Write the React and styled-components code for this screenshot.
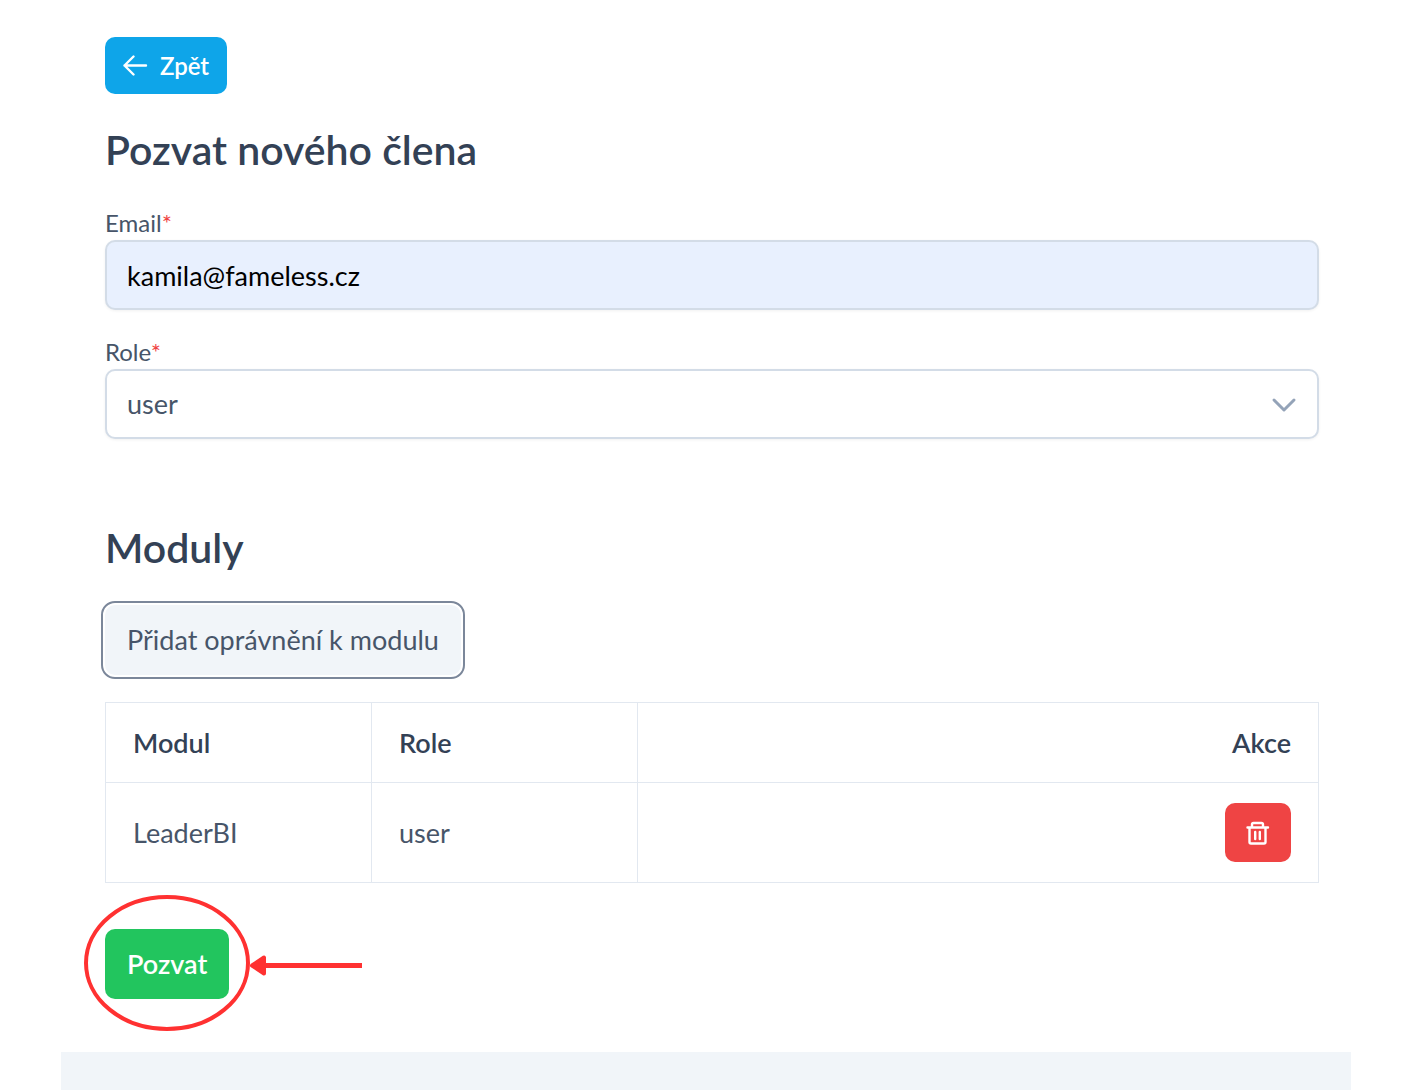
import React, { useState } from "react";
import styled, { createGlobalStyle } from "styled-components";

const App = () => {
  const [email, setEmail] = useState("kamila@fameless.cz");
  const [role, setRole] = useState("user");
  const [modules, setModules] = useState([{ name: "LeaderBI", role: "user" }]);

  const addModule = () => {
    setModules([...modules, { name: "LeaderBI", role: "user" }]);
  };

  const removeModule = (index) => {
    setModules(modules.filter((_, i) => i !== index));
  };

  return (
    <Page>
      <GlobalStyle />
      <Card onSubmit={(e) => e.preventDefault()}>
        <BackButton type="button">
          <svg width="25" height="24" viewBox="0 0 25 24" aria-hidden="true">
            <path
              d="M10.500 2.500 1.500 11.500l9 9M1.500 11.500h21.500"
              fill="none"
              stroke="currentColor"
              strokeWidth="2.400"
              strokeLinecap="round"
              strokeLinejoin="round"
            />
          </svg>
          Zpět
        </BackButton>

        <Title>Pozvat nového člena</Title>

        <Field>
          <Label htmlFor="email">
            Email<Required>*</Required>
          </Label>
          <Input
            id="email"
            type="email"
            value={email}
            onChange={(e) => setEmail(e.target.value)}
          />
        </Field>

        <Field>
          <Label htmlFor="role">
            Role<Required>*</Required>
          </Label>
          <SelectWrapper>
            <Select
              id="role"
              value={role}
              onChange={(e) => setRole(e.target.value)}
            >
              <option value="user">user</option>
              <option value="admin">admin</option>
            </Select>
            <Chevron viewBox="0 0 26 16" aria-hidden="true">
              <path
                d="M3 3l10 10L23 3"
                fill="none"
                stroke="currentColor"
                strokeWidth="3"
                strokeLinecap="round"
                strokeLinejoin="round"
              />
            </Chevron>
          </SelectWrapper>
        </Field>

        <ModulesTitle>Moduly</ModulesTitle>
        <AddButton type="button" onClick={addModule}>
          Přidat oprávnění k modulu
        </AddButton>

        <Table>
          <thead>
            <tr>
              <Th>Modul</Th>
              <Th>Role</Th>
              <Th $last>Akce</Th>
            </tr>
          </thead>
          <tbody>
            {modules.map((item, index) => (
              <tr key={index}>
                <Td>{item.name}</Td>
                <Td>{item.role}</Td>
                <Td $last>
                  <DeleteButton
                    type="button"
                    aria-label="Smazat"
                    onClick={() => removeModule(index)}
                  >
                    <svg width="24" height="24" viewBox="0 0 24 24">
                      <path
                        d="M1.500 6.500h20.500M3.500 6.500v14.500q0 1.500 1.500 1.500h13q1.500 0 1.500-1.500v-14.500M6 6v-2.500q0-1.500 1.500-1.500h8q1.500 0 1.500 1.500v2.500M9.200 11v7M13.800 11v7"
                        fill="none"
                        stroke="currentColor"
                        strokeWidth="2.400"
                        strokeLinecap="round"
                        strokeLinejoin="round"
                      />
                    </svg>
                  </DeleteButton>
                </Td>
              </tr>
            ))}
          </tbody>
        </Table>

        <SubmitArea>
          <SubmitButton type="submit">Pozvat</SubmitButton>
          <Marker viewBox="0 0 280 136" aria-hidden="true">
            <ellipse
              cx="83"
              cy="68"
              rx="81"
              ry="66"
              fill="none"
              stroke="#ff3131"
              strokeWidth="4"
            />
            <path d="M178 70.500h100" stroke="#ff3131" strokeWidth="5" />
            <path
              d="M168 70.500l12-8v16z"
              fill="#ff3131"
              stroke="#ff3131"
              strokeWidth="4"
              strokeLinejoin="round"
            />
          </Marker>
        </SubmitArea>
      </Card>
      <Footer />
    </Page>
  );
};

export default App;

const GlobalStyle = createGlobalStyle`
  * {
    box-sizing: border-box;
  }

  body {
    margin: 0;
    background: white;
    color: #475569;
    font-family: Lato, "Liberation Sans", sans-serif;
    font-size: 27px;
    line-height: 40px;
  }

  button, input, select {
    font: inherit;
  }

  button {
    cursor: pointer;
  }
`;

const Page = styled.div`
  min-height: 100vh;
  padding: 0 61px;
  display: flex;
  flex-direction: column;
`;

const Card = styled.form`
  padding: 37px 32px 53px 44px;
  display: flex;
  flex-direction: column;
  align-items: flex-start;
`;

const Button = styled.button`
  border: none;
  border-radius: 10px;
  color: white;
  font-weight: 600;
`;

const BackButton = styled(Button)`
  height: 57px;
  padding: 0 18px;
  display: flex;
  align-items: center;
  gap: 12px;
  background: #0ea5e9;
  font-size: 24px;
`;

const Title = styled.h1`
  margin: 32px 0 33px;
  color: #334155;
  font-size: 41px;
  font-weight: 600;
  line-height: 48px;
`;

const Field = styled.div`
  width: 100%;
  margin-bottom: 26px;
`;

const Label = styled.label`
  display: block;
  padding-bottom: 2px;
  font-size: 24px;
  line-height: 31px;
`;

const Required = styled.span`
  color: #ef4444;
`;

const Input = styled.input`
  display: block;
  width: 100%;
  height: 70px;
  padding: 0 20px;
  border: 2px solid #d3dce7;
  border-radius: 10px;
  background: #e8f0fe;
  color: black;
  box-shadow: 0 1px 3px rgba(0, 0, 0, 0.06);
  outline: none;
`;

const SelectWrapper = styled.div`
  position: relative;
`;

const Select = styled.select`
  display: block;
  width: 100%;
  height: 70px;
  padding: 0 20px;
  border: 2px solid #d3dce7;
  border-radius: 10px;
  appearance: none;
  background: white;
  color: #475569;
  box-shadow: 0 1px 3px rgba(0, 0, 0, 0.06);
`;

const Chevron = styled.svg`
  position: absolute;
  top: 28px;
  right: 22px;
  width: 26px;
  height: 16px;
  color: #94a3b8;
  pointer-events: none;
`;

const ModulesTitle = styled(Title).attrs({ as: "h2" })`
  margin: 59px 0 33px;
`;

const AddButton = styled(Button)`
  height: 70px;
  padding: 0 22px;
  background: #f1f5f9;
  color: #475569;
  font-weight: 400;
  outline: 2px solid #7b879a;
  outline-offset: 2px;
`;

const Table = styled.table`
  width: 100%;
  margin-top: 27px;
  border-collapse: collapse;
  table-layout: fixed;
`;

const Th = styled.th`
  width: ${(props) => (props.$last ? "auto" : "266px")};
  height: 80px;
  padding: 0 27px;
  border: 1px solid #e2e8f0;
  color: #334155;
  font-weight: 600;
  text-align: ${(props) => (props.$last ? "right" : "left")};
`;

const Td = styled.td`
  height: 100px;
  padding: 0 27px;
  border: 1px solid #e2e8f0;
  text-align: ${(props) => (props.$last ? "right" : "left")};
`;

const DeleteButton = styled(Button)`
  width: 66px;
  height: 59px;
  padding: 0;
  display: inline-flex;
  align-items: center;
  justify-content: center;
  vertical-align: middle;
  background: #ef4444;
`;

const SubmitArea = styled.div`
  position: relative;
  margin-top: 46px;
`;

const SubmitButton = styled(Button)`
  display: block;
  height: 70px;
  padding: 0 22px;
  background: #22c55e;
`;

/* ring and arrow drawn over the submit button */
const Marker = styled.svg`
  position: absolute;
  top: -34px;
  left: -21px;
  width: 280px;
  height: 136px;
  pointer-events: none;
`;

const Footer = styled.footer`
  flex: 1;
  min-height: 38px;
  background: #f1f5f9;
`;
